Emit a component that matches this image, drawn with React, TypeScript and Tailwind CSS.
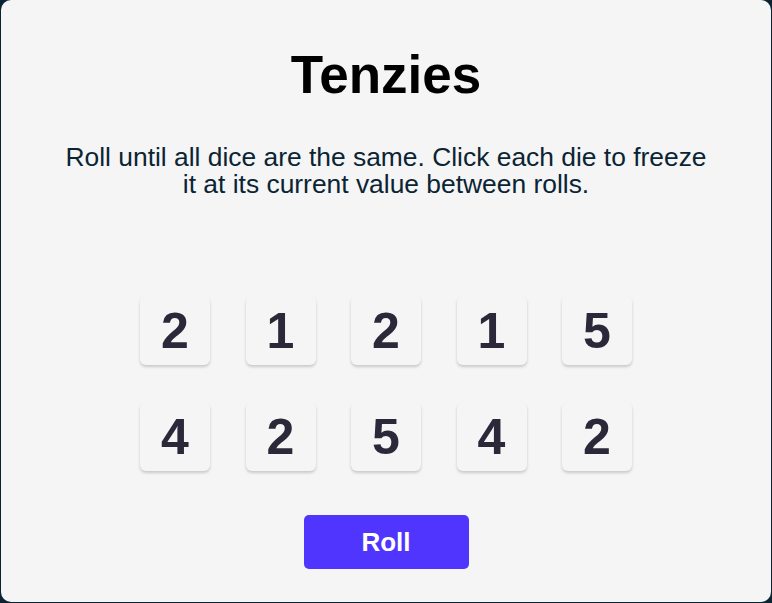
import React from "react";

const dice = [2, 1, 2, 1, 5, 4, 2, 5, 4, 2];

const Die: React.FC<{ value: number }> = ({ value }) => (
  <button className="w-[70px] h-[69px] rounded-[6px] bg-[#f5f5f5] shadow-[0_2px_3px_rgba(0,0,0,0.18)] flex items-center justify-center text-[50px] font-bold text-[#2b283a] leading-none">
    {value}
  </button>
);

export default function App() {
  return (
    <div
      className="w-[772px] h-[603px] bg-[#0b2434] px-[1px] overflow-hidden"
      style={{ fontFamily: '"Liberation Sans", Arial, sans-serif' }}
    >
      <main className="h-[602px] bg-[#f5f5f5] rounded-[10px] flex flex-col items-center">
        <h1 className="mt-[48px] text-[53px] font-bold leading-[54px] text-black">Tenzies</h1>
        <p className="mt-[42px] w-[655px] text-center text-[26.4px] leading-[27px] text-[#0b2434]">
          Roll until all dice are the same. Click each die to freeze it at its current value between rolls.
        </p>
        <div className="mt-[98px] grid grid-cols-5 gap-x-[35.5px] gap-y-[37px]">
          {dice.map((d, i) => (
            <Die key={i} value={d} />
          ))}
        </div>
        <button className="mt-[44px] w-[165px] h-[54px] rounded-[5px] bg-[#5035ff] text-white text-[26px] font-bold">
          Roll
        </button>
      </main>
    </div>
  );
}
